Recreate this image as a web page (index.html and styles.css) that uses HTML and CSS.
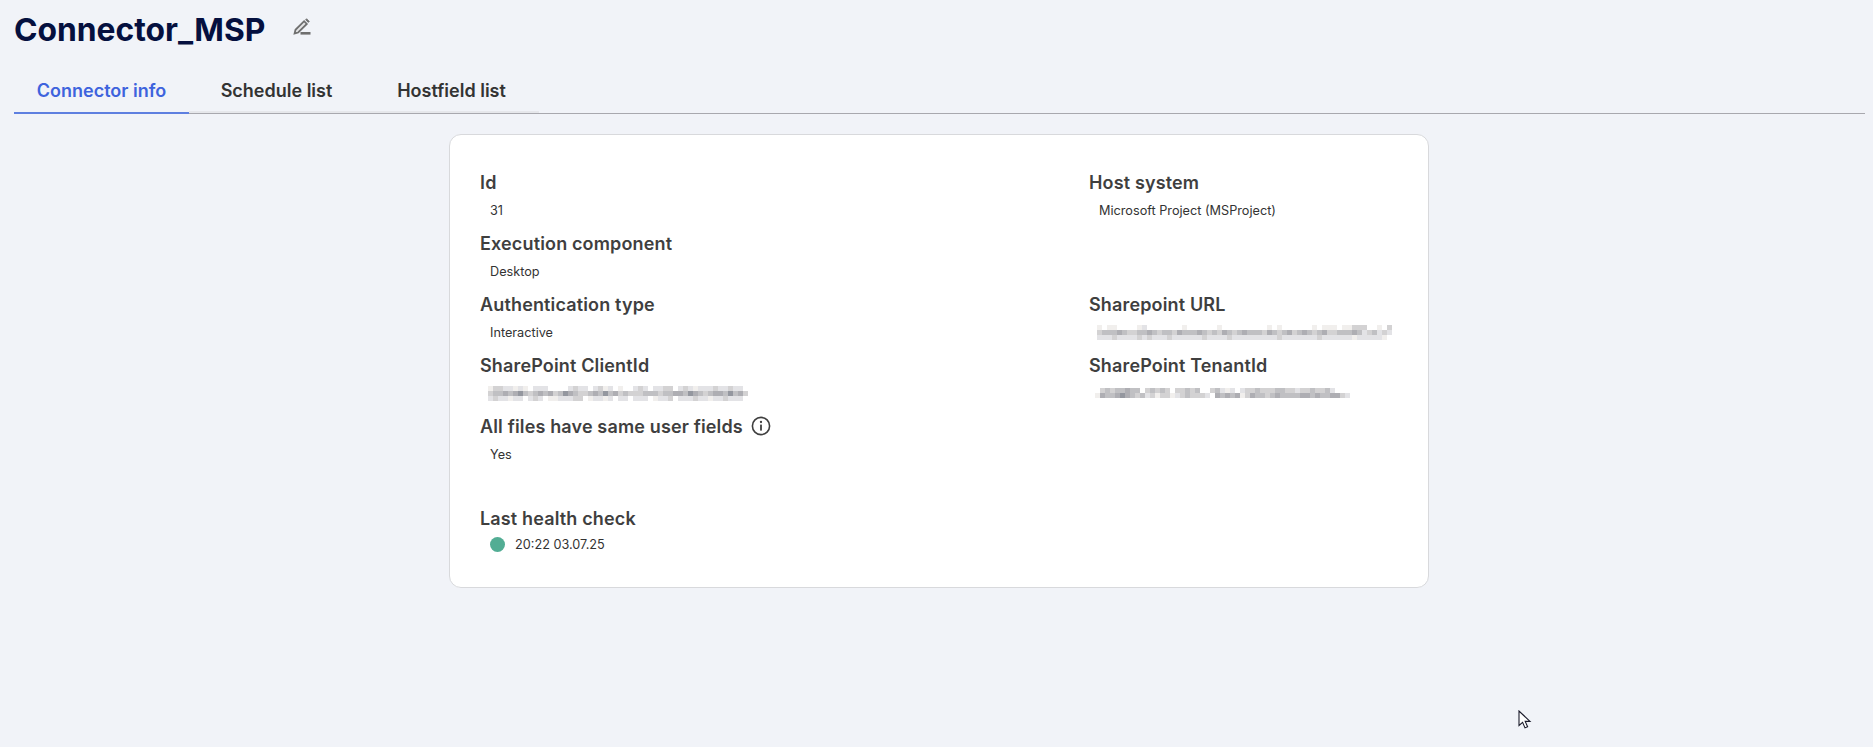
FILE: index.html
```html
<!DOCTYPE html>
<html lang="en">
<head>
  <meta charset="UTF-8">
  <title>Connector_MSP</title>
  <meta name="viewport" content="width=device-width, initial-scale=1.0">
  <link rel="stylesheet" href="styles.css">
</head>
<body>
  <div class="title-row">
    <h1>Connector_MSP</h1>
    <svg class="edit-icon" viewBox="0 0 18 18" width="18" height="18">
      <path d="M1.6 15.4l.9-3.6 8.6-8.6 2.7 2.7-8.6 8.6z" fill="#e4e4e6" stroke="#6f6f6f" stroke-width="1.8"/>
      <path d="M12.6 1.7l1-1 2.7 2.7-1 1z" fill="#6f6f6f" stroke="#6f6f6f" stroke-width=".8"/>
      <rect x="7.5" y="14" width="10" height="2.6" fill="#6f6f6f"/>
    </svg>
  </div>

  <div class="tabs">
    <div class="tab active">Connector info</div>
    <div class="tab">Schedule list</div>
    <div class="tab">Hostfield list</div>
  </div>

  <div class="card">
    <div class="field">
      <div class="label">Id</div>
      <div class="value">31</div>
    </div>
    <div class="field">
      <div class="label">Host system</div>
      <div class="value">Microsoft Project (MSProject)</div>
    </div>
    <div class="field">
      <div class="label">Execution component</div>
      <div class="value">Desktop</div>
    </div>
    <div class="field"></div>
    <div class="field">
      <div class="label">Authentication type</div>
      <div class="value">Interactive</div>
    </div>
    <div class="field">
      <div class="label">Sharepoint URL</div>
      <div class="value"><div class="redacted redacted-url" id="redactedUrl"></div></div>
    </div>
    <div class="field">
      <div class="label">SharePoint ClientId</div>
      <div class="value"><div class="redacted redacted-client" id="redactedClient"></div></div>
    </div>
    <div class="field">
      <div class="label">SharePoint TenantId</div>
      <div class="value"><div class="redacted redacted-tenant" id="redactedTenant"></div></div>
    </div>
    <div class="field">
      <div class="label">All files have same user fields
        <svg class="info-icon" viewBox="0 0 20 20" width="20" height="20">
          <circle cx="10" cy="10" r="8.6" fill="none" stroke="#3f3f3f" stroke-width="1.6"/>
          <rect x="9.1" y="8.6" width="1.8" height="6" fill="#3f3f3f"/>
          <circle cx="10" cy="6" r="1.15" fill="#3f3f3f"/>
        </svg>
      </div>
      <div class="value">Yes</div>
    </div>
    <div class="field"></div>
    <div class="field health">
      <div class="label">Last health check</div>
      <div class="value status"><span class="dot"></span>20:22 03.07.25</div>
    </div>
  </div>

  <svg class="cursor" viewBox="0 0 14 20" width="14" height="20">
    <path d="M1 1v14.5l3.6-3.2 2.4 5.6 2.6-1.1-2.4-5.4h4.8z" fill="#fff" stroke="#1a1a2a" stroke-width="1.1"/>
  </svg>

  <script src="mosaic.js"></script>
</body>
</html>
```

FILE: styles.css
```css
body { margin: 0; padding: 0 8px 0 14px; background: #f1f3f8; color: #3c3c3c; font-family: Inter, "Liberation Sans", sans-serif; }
.title-row { display: flex; align-items: center; height: 58px; }
h1 { margin: 0; font-size: 31.8px; font-weight: 700; color: #05103f; }
.edit-icon { margin-left: 28px; margin-top: -4px; }
.tabs { display: flex; border-bottom: 1px solid #a8a8ae; height: 56px; box-sizing: border-box; }
.tab { box-sizing: border-box; width: 175px; height: 55px; padding-top: 22px; text-align: center; font-size: 18px; font-weight: 600; color: #333; border-bottom: 2px solid #e6e7eb; }
.tab.active { height: 56px; color: #3e63dd; border-bottom-color: #5e7fe0; }
.card { box-sizing: border-box; width: 980px; height: 454px; margin: 20px 0 0 435px; padding: 30px 30px 0; background: #fff; border: 1px solid #d8d9dc; border-radius: 12px; display: grid; grid-template-columns: 609px 1fr; grid-auto-rows: 61px; }
.label { display: flex; align-items: center; height: 34px; margin-bottom: 1px; font-size: 18px; font-weight: 600; letter-spacing: 0.15px; color: #3f3f3f; }
.info-icon { margin-left: 8px; }
.value { padding-left: 10px; height: 20px; display: flex; align-items: center; font-size: 12.7px; color: #333; }
.health { margin-top: 31px; }
.health .value { margin-top: -2px; }
.status .dot { width: 15px; height: 15px; border-radius: 50%; background: #52ad94; margin-right: 10px; }
.redacted { display: flex; flex-direction: column; }
.redacted-row { display: flex; height: 5px; }
.redacted-cell { width: 5px; height: 5px; }
.redacted-client { margin-left: -2px; }
.redacted-url { margin-left: -2px; }
.redacted-tenant { margin-left: -4px; }
.cursor { position: absolute; left: 1518px; top: 710px; }
```

FILE: mosaic.js
```js
// pixelated stand-ins for the blurred values
const shades = { a: "#f1efed", b: "#e3e3e6", c: "#d3d2d3", d: "#c0c0c3", e: "#aeaeb3", f: "#94979f", ".": "transparent" };

const mosaics = {
  redactedClient: [
    "accbbaba.bbb....bcbb.bcab.a..bcb.bbcc.bcbabbbcbbcbb",
    "cddedefdcdedecdfedccdedfdecdcccdddcddeedfedcdeedfdec",
    "bcbbabb.bcb.aabbbcc.abbab.bb.bbb.abbc.bbbcbbabbcbbb"
  ],
  redactedUrl: [
    "a.aa....ab.......a......a.........a.a......a.aaa.aaccc..a.c",
    "cdddedccddedcddcedddedcdcedcdedddcedcdecdedcdeccdddedbcdbcb",
    "bbbcbbbbcbcbbbcbbbbbbcbbbbcbbbbbbbbbcbbbbbbbcbbbbbbabbbbba"
  ],
  redactedTenant: [
    ".cdcddedd.cdcdc.ccdcd..cdbab.bccdcccddccbccdccdb.",
    "aeddefedcdbcaccabcdcccb.ededeaceddcdeddddeededdeecb"
  ]
};

Object.keys(mosaics).forEach(function (id) {
  const box = document.getElementById(id);
  mosaics[id].forEach(function (line) {
    const row = document.createElement("div");
    row.className = "redacted-row";
    line.split("").forEach(function (ch) {
      const cell = document.createElement("div");
      cell.className = "redacted-cell";
      cell.style.background = shades[ch];
      row.appendChild(cell);
    });
    box.appendChild(row);
  });
});
```
